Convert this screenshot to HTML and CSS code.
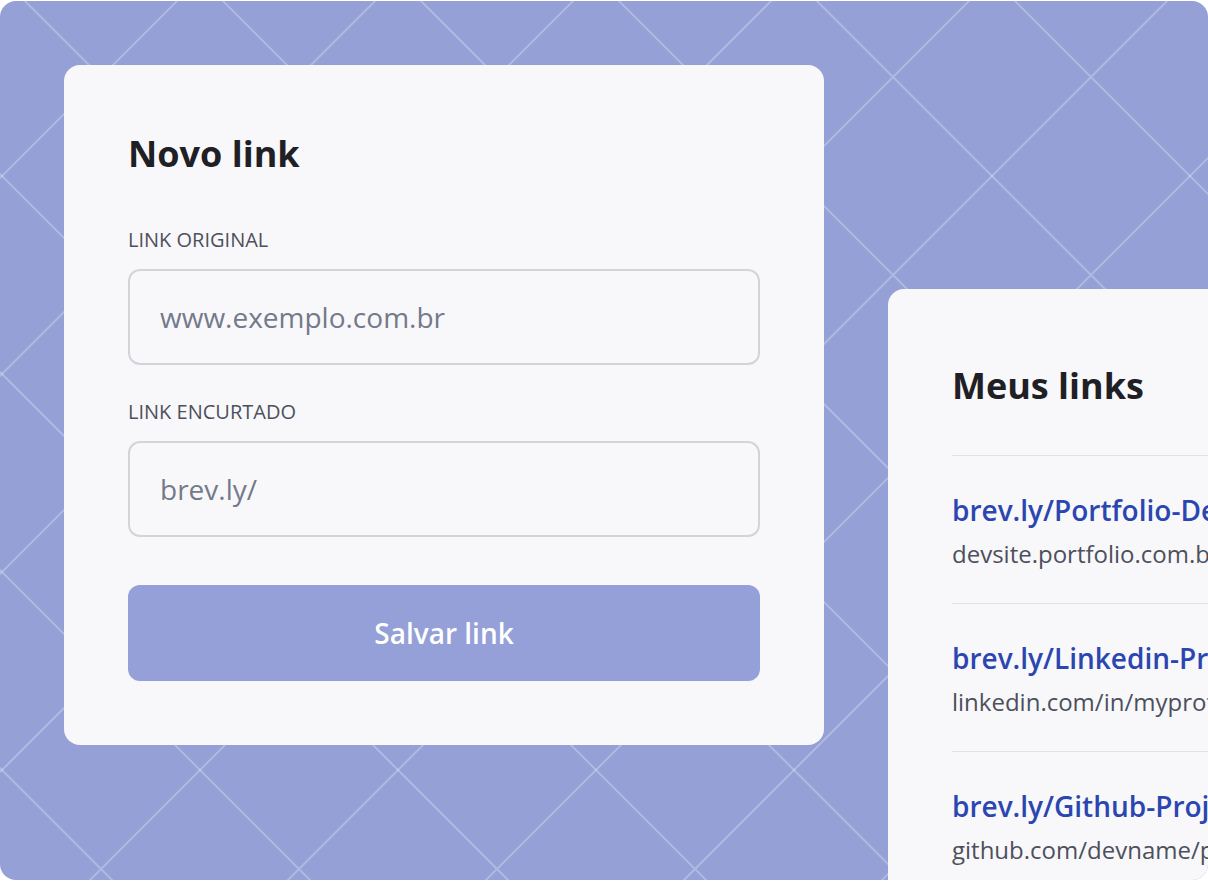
FILE: index.html
```html
<!DOCTYPE html>
<html lang="pt-BR">
<head>
<meta charset="utf-8">
<title>brev.ly</title>
<link rel="stylesheet" href="styles.css">
</head>
<body>
<div class="frame">
  <section class="card form-card">
    <h1 class="card-title">Novo link</h1>
    <div class="fields">
      <label class="field">
        <span class="field-label">LINK ORIGINAL</span>
        <input class="field-input" type="text" placeholder="www.exemplo.com.br">
      </label>
      <label class="field">
        <span class="field-label">LINK ENCURTADO</span>
        <input class="field-input" type="text" placeholder="brev.ly/">
      </label>
    </div>
    <button class="save-btn" type="button">Salvar link</button>
  </section>

  <section class="card list-card">
    <h2 class="card-title list-title">Meus links</h2>
    <ul class="link-list">
      <li class="link-item">
        <span class="short">brev.ly/Portfolio-Dev</span>
        <span class="original">devsite.portfolio.com.br/devname-123456</span>
      </li>
      <li class="link-item">
        <span class="short">brev.ly/Linkedin-Profile</span>
        <span class="original">linkedin.com/in/myprofile</span>
      </li>
      <li class="link-item">
        <span class="short">brev.ly/Github-Project</span>
        <span class="original">github.com/devname/project-name-v2</span>
      </li>
    </ul>
  </section>
</div>
</body>
</html>
```

FILE: styles.css
```css
* { box-sizing: border-box; }

html, body {
  margin: 0;
  padding: 0;
  background: #ffffff;
}

body {
  font-family: "Open Sans", "Noto Sans", "DejaVu Sans", sans-serif;
  padding-top: 1px;
}

.frame {
  width: 1208px;
  height: 879px;
  border-radius: 16px;
  overflow: hidden;
  background-color: #94a0d6;
  background-image:
    linear-gradient(45deg, transparent calc(50% - 0.8px), rgba(255,255,255,0.24) calc(50% - 0.8px), rgba(255,255,255,0.24) calc(50% + 0.8px), transparent calc(50% + 0.8px)),
    linear-gradient(-45deg, transparent calc(50% - 0.8px), rgba(255,255,255,0.24) calc(50% - 0.8px), rgba(255,255,255,0.24) calc(50% + 0.8px), transparent calc(50% + 0.8px));
  background-size: 198px 198px;
  background-position: 101px 76px;
  display: flex;
  align-items: flex-start;
  gap: 64px;
  padding: 64px;
}

.card {
  flex: 0 0 760px;
  width: 760px;
  background: #f8f8fa;
  border-radius: 16px;
}

.form-card {
  padding: 64px;
  display: flex;
  flex-direction: column;
}

.card-title {
  margin: 0;
  font-size: 36px;
  font-weight: 700;
  line-height: 49px;
  color: #1f2025;
}

.fields {
  margin-top: 48px;
  display: flex;
  flex-direction: column;
  gap: 33px;
}

.field {
  display: flex;
  flex-direction: column;
  gap: 16px;
}

.field-label {
  font-size: 20px;
  line-height: 27px;
  color: #4d505c;
}

.field-input {
  height: 96px;
  width: 100%;
  border: 2px solid #d3d4da;
  border-radius: 12px;
  background: #f8f8fa;
  padding: 0 30px;
  font-family: inherit;
  font-size: 28px;
  color: #1f2025;
  outline: none;
}

.field-input::placeholder {
  color: #74798b;
}

.save-btn {
  margin-top: 48px;
  height: 96px;
  width: 100%;
  border: none;
  border-radius: 12px;
  background: #94a0d7;
  color: #ffffff;
  font-family: inherit;
  font-size: 28px;
  font-weight: 600;
}

.list-card {
  margin-top: 224px;
  padding: 72px 64px 64px;
}

.list-title {
  margin-bottom: 45px;
}

.link-list {
  list-style: none;
  margin: 0;
  padding: 0;
}

.link-item {
  border-top: 1.5px solid #e2e3e8;
  padding: 35px 0 33px;
  display: flex;
  flex-direction: column;
  gap: 8px;
  white-space: nowrap;
}

.short {
  font-size: 28px;
  line-height: 38px;
  font-weight: 600;
  color: #2c46b1;
}

.original {
  font-size: 24px;
  line-height: 33px;
  color: #4d505c;
}
```
